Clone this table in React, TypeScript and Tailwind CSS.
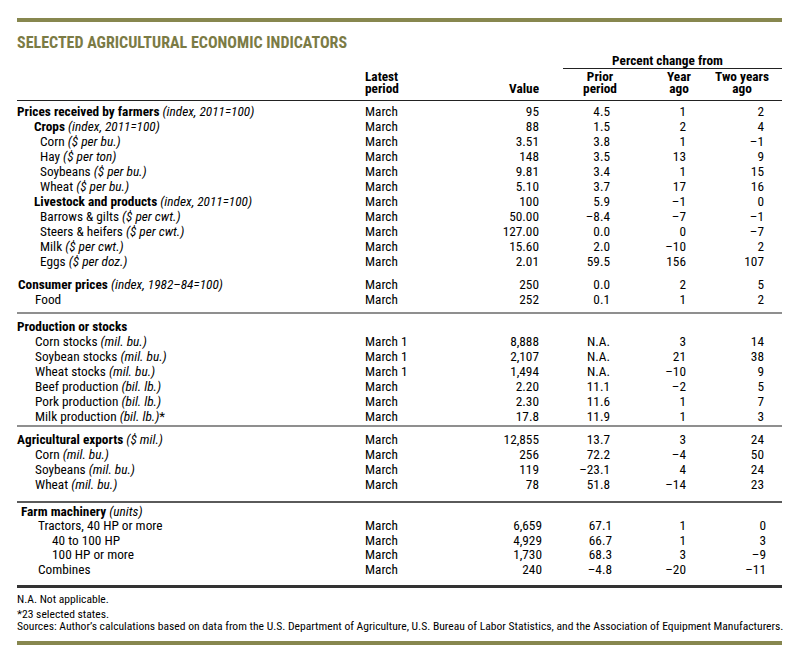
import React from 'react';

type Row = {
  pad: string;
  name: string;
  bold?: boolean;
  unit?: string;
  after?: string;
  period: string;
  value: string;
  prior: string;
  year: string;
  two: string;
};

const prices: Row[] = [
  { pad: 'pl-0', name: 'Prices received by farmers', bold: true, unit: '(index, 2011=100)', period: 'March', value: '95', prior: '4.5', year: '1', two: '2' },
  { pad: 'pl-[17px]', name: 'Crops', bold: true, unit: '(index, 2011=100)', period: 'March', value: '88', prior: '1.5', year: '2', two: '4' },
  { pad: 'pl-[23px]', name: 'Corn', unit: '($ per bu.)', period: 'March', value: '3.51', prior: '3.8', year: '1', two: '–1' },
  { pad: 'pl-[23px]', name: 'Hay', unit: '($ per ton)', period: 'March', value: '148', prior: '3.5', year: '13', two: '9' },
  { pad: 'pl-[23px]', name: 'Soybeans', unit: '($ per bu.)', period: 'March', value: '9.81', prior: '3.4', year: '1', two: '15' },
  { pad: 'pl-[23px]', name: 'Wheat', unit: '($ per bu.)', period: 'March', value: '5.10', prior: '3.7', year: '17', two: '16' },
  { pad: 'pl-[17px]', name: 'Livestock and products', bold: true, unit: '(index, 2011=100)', period: 'March', value: '100', prior: '5.9', year: '–1', two: '0' },
  { pad: 'pl-[23px]', name: 'Barrows & gilts', unit: '($ per cwt.)', period: 'March', value: '50.00', prior: '–8.4', year: '–7', two: '–1' },
  { pad: 'pl-[23px]', name: 'Steers & heifers', unit: '($ per cwt.)', period: 'March', value: '127.00', prior: '0.0', year: '0', two: '–7' },
  { pad: 'pl-[23px]', name: 'Milk', unit: '($ per cwt.)', period: 'March', value: '15.60', prior: '2.0', year: '–10', two: '2' },
  { pad: 'pl-[23px]', name: 'Eggs', unit: '($ per doz.)', period: 'March', value: '2.01', prior: '59.5', year: '156', two: '107' },
];

const consumer: Row[] = [
  { pad: 'pl-[1px]', name: 'Consumer prices', bold: true, unit: '(index, 1982–84=100)', period: 'March', value: '250', prior: '0.0', year: '2', two: '5' },
  { pad: 'pl-[18px]', name: 'Food', period: 'March', value: '252', prior: '0.1', year: '1', two: '2' },
];

const production: Row[] = [
  { pad: 'pl-0', name: 'Production or stocks', bold: true, period: '', value: '', prior: '', year: '', two: '' },
  { pad: 'pl-[18px]', name: 'Corn stocks', unit: '(mil. bu.)', period: 'March 1', value: '8,888', prior: 'N.A.', year: '3', two: '14' },
  { pad: 'pl-[18px]', name: 'Soybean stocks', unit: '(mil. bu.)', period: 'March 1', value: '2,107', prior: 'N.A.', year: '21', two: '38' },
  { pad: 'pl-[18px]', name: 'Wheat stocks', unit: '(mil. bu.)', period: 'March 1', value: '1,494', prior: 'N.A.', year: '–10', two: '9' },
  { pad: 'pl-[18px]', name: 'Beef production', unit: '(bil. lb.)', period: 'March', value: '2.20', prior: '11.1', year: '–2', two: '5' },
  { pad: 'pl-[18px]', name: 'Pork production', unit: '(bil. lb.)', period: 'March', value: '2.30', prior: '11.6', year: '1', two: '7' },
  { pad: 'pl-[18px]', name: 'Milk production', unit: '(bil. lb.)', after: '*', period: 'March', value: '17.8', prior: '11.9', year: '1', two: '3' },
];

const exportsRows: Row[] = [
  { pad: 'pl-0', name: 'Agricultural exports', bold: true, unit: '($ mil.)', period: 'March', value: '12,855', prior: '13.7', year: '3', two: '24' },
  { pad: 'pl-[18px]', name: 'Corn', unit: '(mil. bu.)', period: 'March', value: '256', prior: '72.2', year: '–4', two: '50' },
  { pad: 'pl-[18px]', name: 'Soybeans', unit: '(mil. bu.)', period: 'March', value: '119', prior: '–23.1', year: '4', two: '24' },
  { pad: 'pl-[18px]', name: 'Wheat', unit: '(mil. bu.)', period: 'March', value: '78', prior: '51.8', year: '–14', two: '23' },
];

const machinery: Row[] = [
  { pad: 'pl-[4px]', name: 'Farm machinery', bold: true, unit: '(units)', period: '', value: '', prior: '', year: '', two: '' },
  { pad: 'pl-[21px]', name: 'Tractors, 40 HP or more', period: 'March', value: '6,659', prior: '67.1', year: '1', two: '0' },
  { pad: 'pl-[35px]', name: '40 to 100 HP', period: 'March', value: '4,929', prior: '66.7', year: '1', two: '3' },
  { pad: 'pl-[35px]', name: '100 HP or more', period: 'March', value: '1,730', prior: '68.3', year: '3', two: '–9' },
  { pad: 'pl-[21px]', name: 'Combines', period: 'March', value: '240', prior: '–4.8', year: '–20', two: '–11' },
];

function TableRow({ row, farm }: { row: Row; farm?: boolean }) {
  return (
    <div
      className={
        farm
          ? 'grid grid-cols-[348px_105px_72px_70px_74px_80px_1fr] leading-[14.5px]'
          : 'grid grid-cols-[348px_105px_69px_71px_76px_78px_1fr] leading-[15px]'
      }
    >
      <div className={`${row.pad} whitespace-nowrap`}>
        <span className={row.bold ? 'font-bold' : ''}>{row.name}</span>
        {row.unit && <i> {row.unit}</i>}
        {row.after}
      </div>
      <div className="whitespace-nowrap">{row.period}</div>
      <div className="text-right">{row.value}</div>
      <div className="text-right">{row.prior}</div>
      <div className="text-right">{row.year}</div>
      <div className="text-right">{row.two}</div>
      <div />
    </div>
  );
}

export default function App() {
  return (
    <div className="w-[800px] h-[659px] overflow-hidden bg-white text-black font-[Roboto,sans-serif] font-stretch-condensed pt-[18px] pl-[17px] pr-[18px]">
      <div className="h-[4px] bg-[#87874f]" />
      <div className="mt-[12.5px] text-[16px] leading-[15px] font-bold text-[#7b7b45] whitespace-nowrap">
        SELECTED AGRICULTURAL ECONOMIC INDICATORS
      </div>

      <div className="text-[13.3px]">
        {/* column headings */}
        <div className="mt-[5.7px] flex items-end border-b border-[#222] pb-[4.5px] font-bold leading-[12px]">
          <div className="w-[348px]" />
          <div className="w-[105px]">
            Latest
            <br />
            period
          </div>
          <div className="w-[69px] text-right">Value</div>
          <div className="w-[24px]" />
          <div className="flex-1">
            <div className="border-b border-[#222] pb-[1px] pr-[10px] text-center">Percent change from</div>
            <div className="mt-[2.3px] flex">
              <div className="w-[74px] flex justify-center text-center whitespace-nowrap">
                <div>
                  Prior
                  <br />
                  period
                </div>
              </div>
              <div className="w-[84px] flex justify-center text-center whitespace-nowrap">
                <div>
                  Year
                  <br />
                  ago
                </div>
              </div>
              <div className="w-[42px] flex justify-center text-center whitespace-nowrap">
                <div>
                  Two years
                  <br />
                  ago
                </div>
              </div>
            </div>
          </div>
        </div>

        <div className="pt-[3.2px]">
          {prices.map((r) => (
            <TableRow key={r.name + r.unit} row={r} />
          ))}
          <div className="mt-[8.3px]">
            {consumer.map((r) => (
              <TableRow key={r.name} row={r} />
            ))}
          </div>
          <div className="mt-[4.5px] h-[2px] bg-[#8f8f8f]" />
          <div className="mt-[5.2px]">
            {production.map((r) => (
              <TableRow key={r.name} row={r} />
            ))}
          </div>
          <div className="mt-[1.3px] h-[2px] bg-[#8f8f8f]" />
          <div className="mt-[5px]">
            {exportsRows.map((r) => (
              <TableRow key={r.name} row={r} />
            ))}
          </div>
          <div className="mt-[8.2px] h-[2px] bg-[#5a5a5a]" />
          <div className="mt-[2.3px]">
            {machinery.map((r) => (
              <TableRow key={r.name} row={r} farm />
            ))}
          </div>
          <div className="mt-[7.8px] h-[3px] bg-[#333]" />
        </div>
      </div>

      {/* notes */}
      <div className="mt-[3.4px] text-[11.6px] leading-[15px] whitespace-nowrap">
        <div>N.A. Not applicable.</div>
        <div>*23 selected states.</div>
        <div className="-mt-[3px]">
          Sources: Author’s calculations based on data from the U.S. Department of Agriculture, U.S. Bureau of Labor Statistics, and the Association of Equipment Manufacturers.
        </div>
      </div>
      <div className="mt-[7.3px] h-[4px] bg-[#87874f]" />
    </div>
  );
}
